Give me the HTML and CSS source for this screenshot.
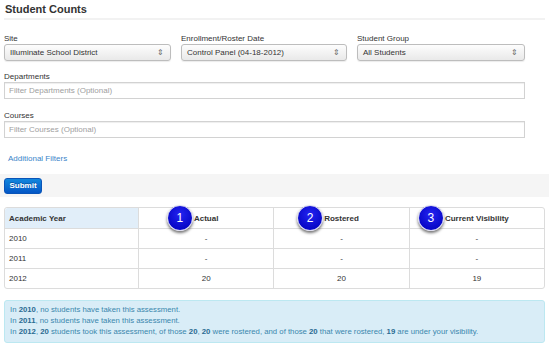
FILE: index.html
```html
<!DOCTYPE html>
<html>
<head>
<meta charset="utf-8">
<link rel="stylesheet" href="styles.css">
</head>
<body>
<div class="page">
  <h1 class="title">Student Counts</h1>
  <div class="selects">
    <div class="field">
      <label class="lbl">Site</label>
      <div class="select"><span>Illuminate School District</span><span class="arrows">&#8661;</span></div>
    </div>
    <div class="field">
      <label class="lbl">Enrollment/Roster Date</label>
      <div class="select"><span>Control Panel (04-18-2012)</span><span class="arrows">&#8661;</span></div>
    </div>
    <div class="field">
      <label class="lbl">Student Group</label>
      <div class="select"><span>All Students</span><span class="arrows">&#8661;</span></div>
    </div>
  </div>
  <div class="field wide">
    <label class="lbl">Departments</label>
    <div class="input">Filter Departments (Optional)</div>
  </div>
  <div class="field wide">
    <label class="lbl">Courses</label>
    <div class="input">Filter Courses (Optional)</div>
  </div>
  <a class="more">Additional Filters</a>
</div>
<div class="actions"><button class="submit">Submit</button></div>
<div class="page">
  <table class="counts">
    <thead>
      <tr>
        <th class="year">Academic Year</th>
        <th><span class="hd"><span class="badge">1</span>Actual</span></th>
        <th><span class="hd"><span class="badge">2</span>Rostered</span></th>
        <th><span class="hd"><span class="badge">3</span>Current Visibility</span></th>
      </tr>
    </thead>
    <tbody>
      <tr><td class="year">2010</td><td>-</td><td>-</td><td>-</td></tr>
      <tr><td class="year">2011</td><td>-</td><td>-</td><td>-</td></tr>
      <tr><td class="year">2012</td><td>20</td><td>20</td><td>19</td></tr>
    </tbody>
  </table>
  <div class="info">
    <p>In <b>2010</b>, no students have taken this assessment.</p>
    <p>In <b>2011</b>, no students have taken this assessment.</p>
    <p>In <b>2012</b>, <b>20</b> students took this assessment, of those <b>20</b>, <b>20</b> were rostered, and of those <b>20</b> that were rostered, <b>19</b> are under your visibility.</p>
  </div>
</div>
</body>
</html>
```
FILE: styles.css
```css
html, body {
  margin: 0;
  padding: 0;
  background: #fff;
}
body {
  font-family: "Liberation Sans", Arial, sans-serif;
  font-size: 8px;
  color: #333;
  width: 549px;
  height: 343px;
  overflow: hidden;
}
.page {
  padding: 0 4px;
}
.title {
  margin: 0;
  padding: 3px 1px 2px;
  font-size: 11px;
  line-height: 13px;
  font-weight: bold;
  color: #333;
  border-bottom: 2px solid #f2f2f2;
}
.selects {
  display: grid;
  grid-template-columns: 167px 166px 168px;
  column-gap: 10px;
  margin-top: 14px;
  width: 521px;
}
.field {
  display: flex;
  flex-direction: column;
}
.lbl {
  font-size: 8px;
  line-height: 10px;
  margin: 0;
  color: #333;
}
.select {
  height: 17px;
  box-sizing: border-box;
  border: 1px solid #bdbdbd;
  border-radius: 3px;
  background: linear-gradient(#fdfdfd, #e9e9e9);
  display: flex;
  align-items: center;
  justify-content: space-between;
  padding: 0 6px 0 5px;
  color: #333;
  box-shadow: 0 1px 1px rgba(0,0,0,0.08);
}
.arrows {
  font-size: 8px;
  color: #666;
}
.wide {
  margin-top: 11px;
  width: 521px;
}
.wide + .wide {
  margin-top: 12px;
}
.input {
  height: 17px;
  box-sizing: border-box;
  border: 1px solid #d2d2d2;
  box-shadow: inset 0 1px 1px rgba(0,0,0,0.07);
  display: flex;
  align-items: center;
  padding: 0 4px;
  color: #a0a0a0;
}
.more {
  display: block;
  margin: 16px 0 0 4px;
  color: #3b84c9;
  line-height: 9px;
}
.actions {
  margin-top: 11px;
  background: #f5f5f5;
  height: 23px;
  display: flex;
  align-items: center;
  padding: 0 4px;
}
.submit {
  width: 38px;
  height: 16px;
  border: 1px solid #0a55b8;
  border-radius: 3px;
  background: linear-gradient(#1287dd, #0557c6);
  color: #fff;
  font-family: "Liberation Sans", Arial, sans-serif;
  font-size: 8px;
  font-weight: bold;
  padding: 0;
  text-shadow: 0 -1px 0 rgba(0,0,0,0.25);
}
.counts {
  margin-top: 10px;
  width: 541px;
  border-collapse: separate;
  border-spacing: 0;
  border: 1px solid #dcdcdc;
  border-radius: 3px;
  table-layout: fixed;
}
.counts th, .counts td {
  height: 19px;
  padding: 0 4px;
  text-align: center;
  border-left: 1px solid #dcdcdc;
  border-top: 1px solid #dcdcdc;
  font-size: 8px;
  color: #333;
}
.counts th {
  height: 20px;
  border-top: none;
  font-weight: bold;
}
.counts th:first-child, .counts td:first-child {
  border-left: none;
}
.counts .year {
  text-align: left;
  padding-left: 4px;
  width: 125px;
}
.counts th.year {
  background: #e1eef9;
  border-top-left-radius: 3px;
}
.hd {
  position: relative;
  display: inline-block;
}
.badge {
  position: absolute;
  right: calc(100% + 1px);
  top: -9px;
  width: 26px;
  height: 26px;
  border-radius: 50%;
  box-sizing: border-box;
  border: 1px solid #d8d8f0;
  background: radial-gradient(circle at 50% 35%, #2424f2, #0808c8 70%);
  color: #fff;
  font-weight: normal;
  font-size: 12px;
  line-height: 24px;
  text-align: center;
  box-shadow: 0 2px 3px rgba(0,0,0,0.55);
}
.info {
  margin-top: 11px;
  width: 541px;
  box-sizing: border-box;
  background: #d9edf7;
  border: 1px solid #bce8f1;
  border-radius: 3px;
  padding: 3px 5px 5px;
  color: #3a87ad;
  font-size: 7.75px;
}
.info p {
  margin: 0;
  line-height: 11px;
}
.info b {
  color: #2a6b92;
}
```
